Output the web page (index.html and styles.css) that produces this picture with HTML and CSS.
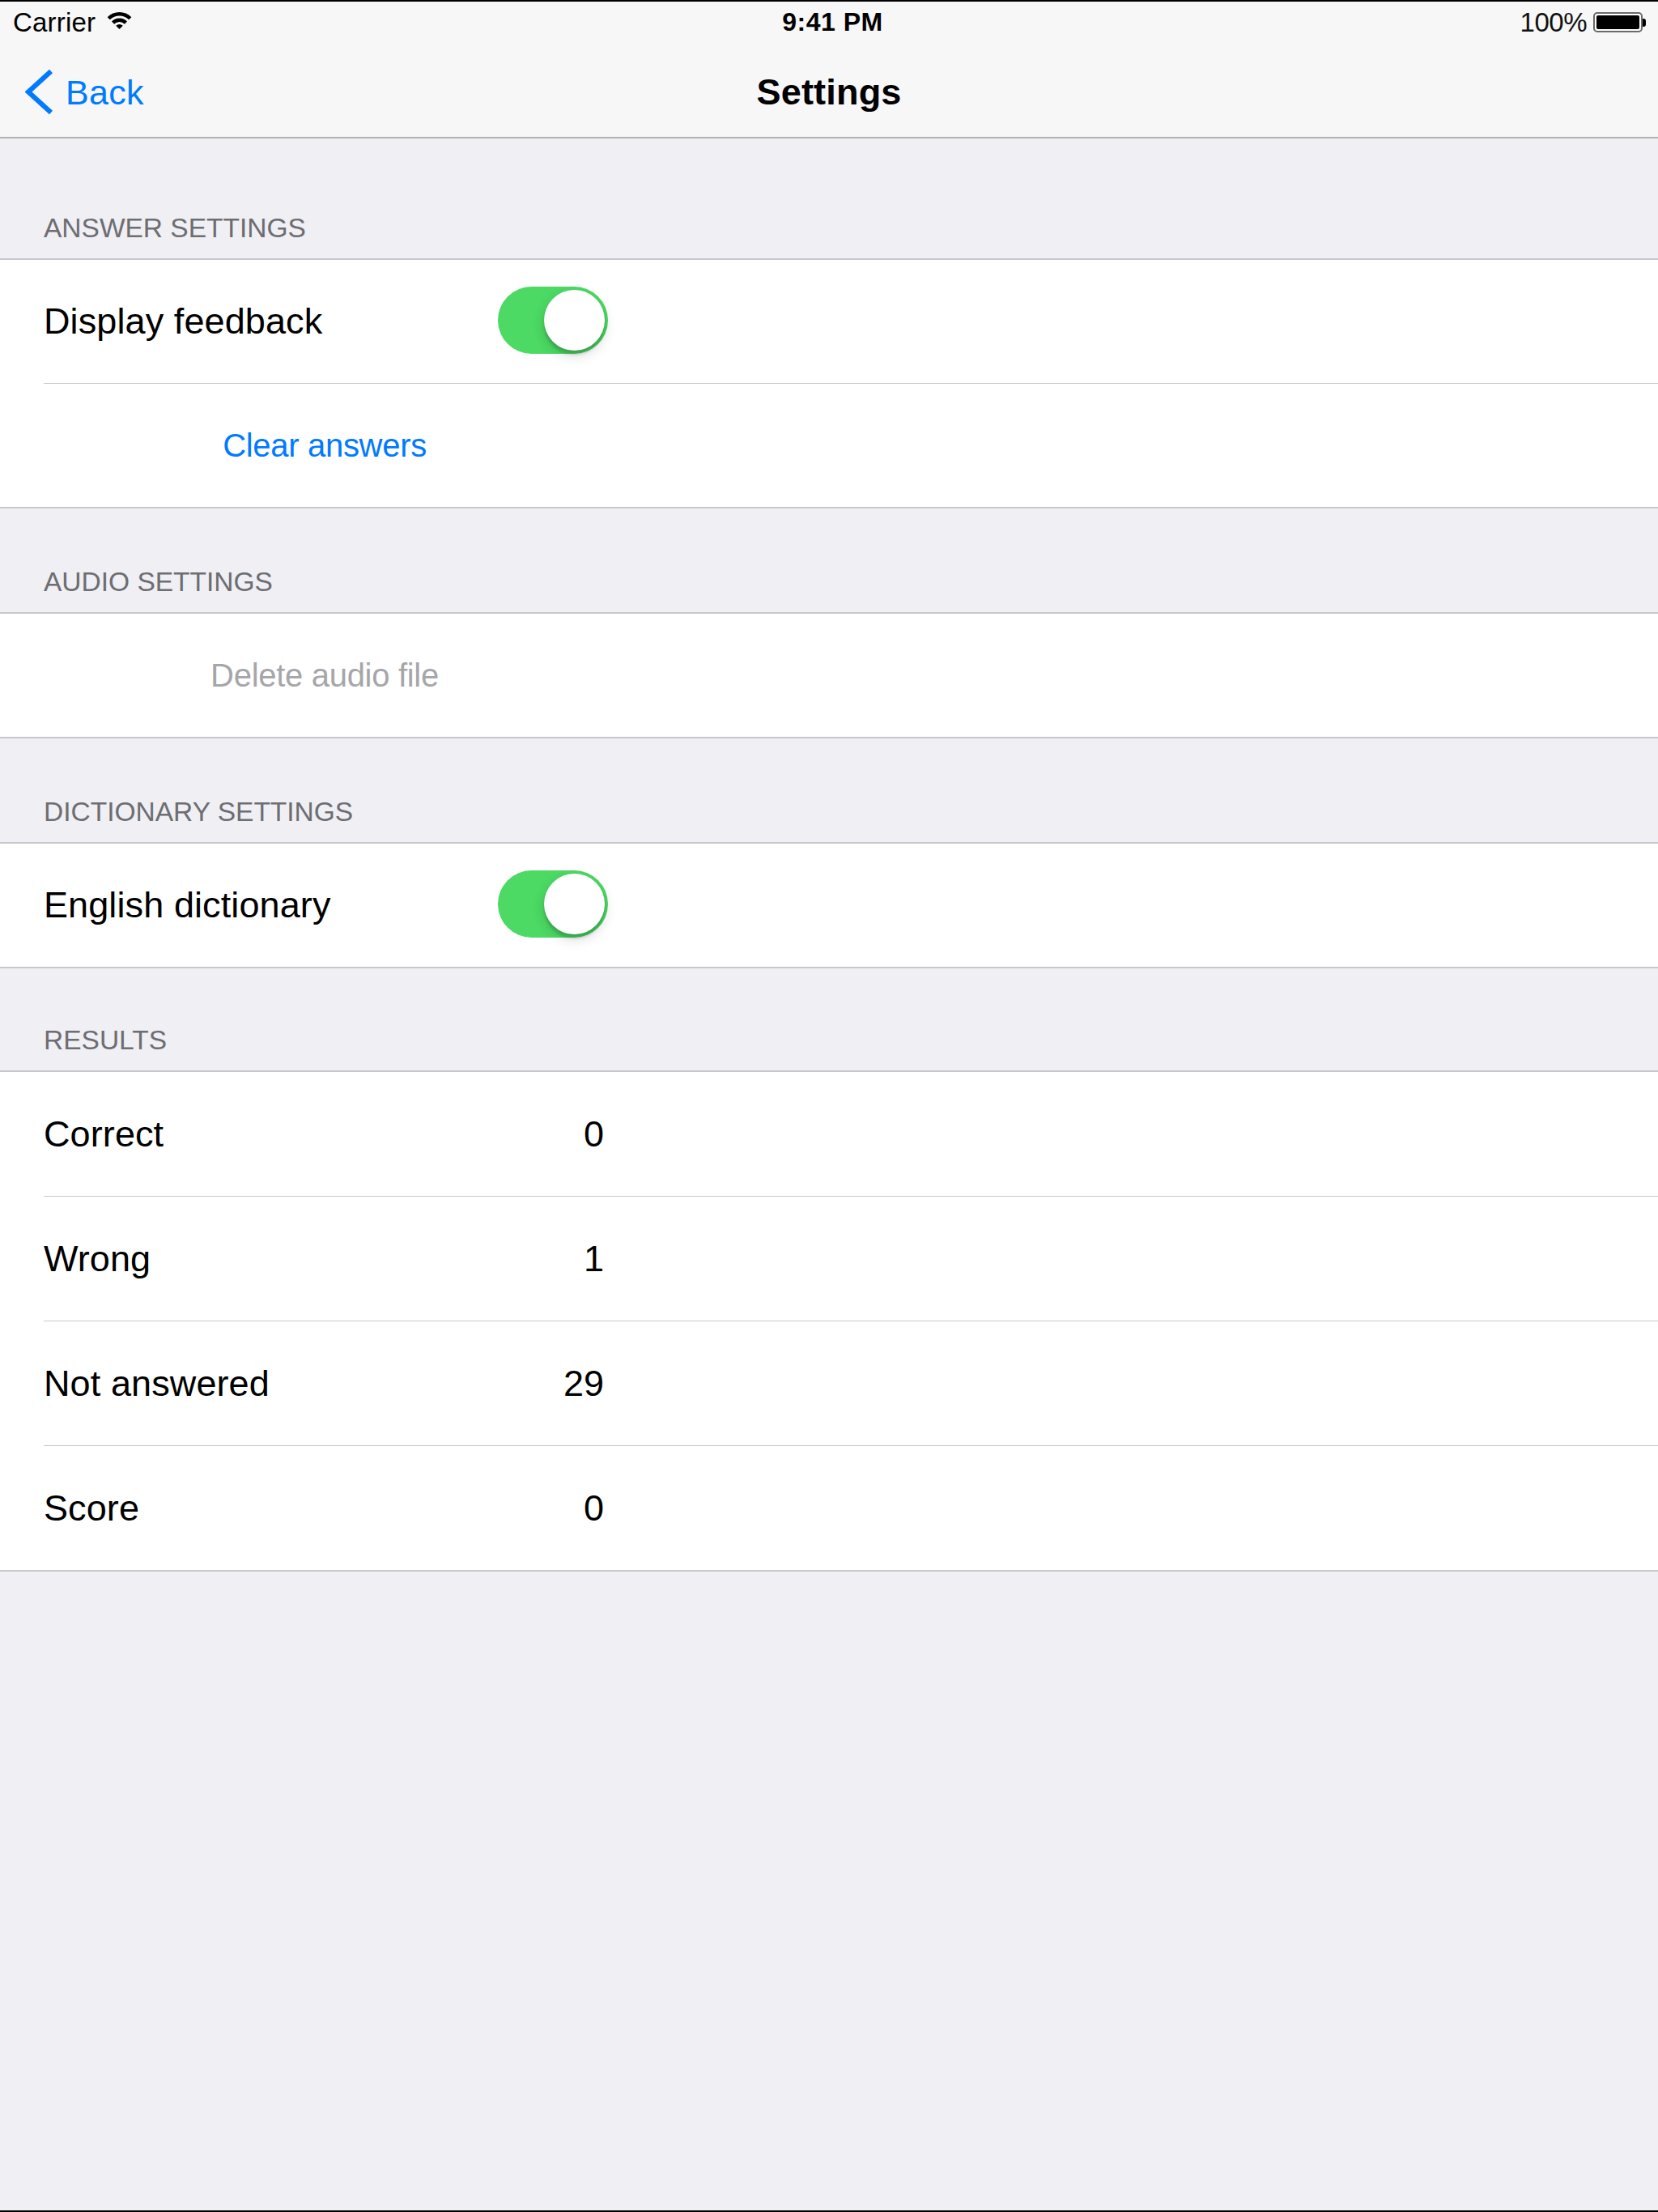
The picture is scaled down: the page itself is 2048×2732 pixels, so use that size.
FILE: index.html
```html
<!DOCTYPE html>
<html lang="en">
<head>
<meta charset="utf-8">
<title>Settings</title>
<link rel="stylesheet" href="styles.css">
</head>
<body>
<div class="screen">
  <header class="bars">
    <div class="status">
      <div class="status-left">
        <span class="carrier">Carrier</span>
        <svg class="wifi" width="31" height="23" viewBox="0 0 31 23">
          <path d="M0.65 7.15 A21 21 0 0 1 30.35 7.15 L27.17 10.33 A16.5 16.5 0 0 0 3.83 10.33 Z"/>
          <path d="M5.95 12.45 A13.5 13.5 0 0 1 25.05 12.45 L21.86 15.64 A9 9 0 0 0 9.14 15.64 Z"/>
          <path d="M15.5 22 L11.26 17.76 A6 6 0 0 1 19.74 17.76 Z"/>
        </svg>
      </div>
      <div class="status-time">9:41 PM</div>
      <div class="status-right">
        <span class="pct">100%</span>
        <div class="battery"><div class="battery-body"><div class="battery-fill"></div></div><div class="battery-nub"></div></div>
      </div>
    </div>
    <nav class="navbar">
      <a class="back">
        <svg class="chevron" width="36" height="58" viewBox="0 0 36 58">
          <path d="M32 3 L4 28.5 L32 54" fill="none" stroke="#007aff" stroke-width="6" stroke-linejoin="miter"/>
        </svg>
        <span class="back-label">Back</span>
      </a>
      <div class="title">Settings</div>
      <div class="nav-right"></div>
    </nav>
  </header>

  <main class="table">
    <div class="sec-header first">ANSWER SETTINGS</div>
    <section class="group">
      <div class="row"><div class="row-inner sep"><div class="content">
        <span class="label">Display feedback</span>
        <div class="switch"><div class="knob"></div></div>
      </div></div></div>
      <div class="row"><div class="row-inner"><div class="content center">
        <span class="link">Clear answers</span>
      </div></div></div>
    </section>

    <div class="sec-header">AUDIO SETTINGS</div>
    <section class="group">
      <div class="row"><div class="row-inner"><div class="content center">
        <span class="link disabled">Delete audio file</span>
      </div></div></div>
    </section>

    <div class="sec-header">DICTIONARY SETTINGS</div>
    <section class="group">
      <div class="row"><div class="row-inner"><div class="content">
        <span class="label">English dictionary</span>
        <div class="switch"><div class="knob"></div></div>
      </div></div></div>
    </section>

    <div class="sec-header short">RESULTS</div>
    <section class="group">
      <div class="row tall"><div class="row-inner sep"><div class="content">
        <span class="label">Correct</span><span class="value">0</span>
      </div></div></div>
      <div class="row tall"><div class="row-inner sep"><div class="content">
        <span class="label">Wrong</span><span class="value">1</span>
      </div></div></div>
      <div class="row tall"><div class="row-inner sep"><div class="content">
        <span class="label">Not answered</span><span class="value">29</span>
      </div></div></div>
      <div class="row tall"><div class="row-inner"><div class="content">
        <span class="label">Score</span><span class="value">0</span>
      </div></div></div>
    </section>
  </main>
</div>
</body>
</html>
```

FILE: styles.css
```css
* { box-sizing: border-box; }

html, body {
  margin: 0;
  padding: 0;
}

body {
  width: 2048px;
  height: 2732px;
  background: #efeff4;
  font-family: "Liberation Sans", Arial, sans-serif;
  color: #000;
}

.screen {
  width: 2048px;
  height: 2732px;
  background: #efeff4;
  border-top: 2px solid #000;
  border-bottom: 2px solid #000;
  display: flex;
  flex-direction: column;
}

/* ---------- status + nav ---------- */
.bars {
  background: #f7f7f7;
  border-bottom: 2px solid #b1b1b3;
}

.status {
  height: 51px;
  display: grid;
  grid-template-columns: 1fr auto 1fr;
  align-items: center;
  padding: 0 15px 0 16px;
  font-size: 33px;
}

.status-left {
  display: flex;
  align-items: center;
  gap: 14px;
}

.carrier { letter-spacing: 0.2px; }

.wifi { fill: #000; margin-top: -4px; }

.status-time {
  font-weight: 700;
  font-size: 32px;
  letter-spacing: 0.5px;
  padding-left: 8px;
}

.status-right {
  display: flex;
  align-items: center;
  justify-content: flex-end;
  gap: 8px;
}

.pct { letter-spacing: -0.5px; color: #111; }

.battery {
  display: flex;
  align-items: center;
}

.battery-body {
  width: 61px;
  height: 25px;
  border: 2px solid #6a6a6a;
  border-radius: 5px;
  padding: 2px;
  background: #fff;
}

.battery-fill {
  width: 100%;
  height: 100%;
  background: #000;
  border-radius: 2px;
}

.battery-nub {
  width: 4px;
  height: 10px;
  background: #000;
  border-radius: 0 3px 3px 0;
}

.navbar {
  height: 116px;
  display: grid;
  grid-template-columns: 1fr auto 1fr;
  align-items: center;
  padding-top: 6px;
}

.back {
  display: flex;
  align-items: center;
  gap: 14px;
  padding-left: 31px;
  color: #007aff;
}

.chevron { display: block; }

.back-label {
  font-size: 43px;
  letter-spacing: 0.3px;
}

.title {
  font-size: 45px;
  font-weight: 700;
  letter-spacing: 0.2px;
}

/* ---------- table ---------- */
.table {
  display: flex;
  flex-direction: column;
}

.sec-header {
  height: 128px;
  display: flex;
  align-items: flex-end;
  padding: 0 0 21px 54px;
  font-size: 33.5px;
  line-height: 1;
  color: #6d6d72;
}

.sec-header.first { height: 148px; }
.sec-header.short { height: 126px; }

.group {
  background: #fff;
  border-top: 2px solid #c8c7cc;
  border-bottom: 2px solid #c8c7cc;
}

.row {
  padding-left: 54px;
}

.row-inner {
  height: 152px;
  display: flex;
  align-items: center;
}

.row-inner.sep {
  height: 153px;
  border-bottom: 1px solid #c8c7cc;
}

.row.tall .row-inner { height: 153px; }
.row.tall .row-inner.sep { height: 154px; }

.content {
  width: 694px;
  display: flex;
  align-items: center;
  justify-content: space-between;
}

.content.center { justify-content: center; }

.label {
  font-size: 45px;
  letter-spacing: 0.1px;
}

.value {
  font-size: 45px;
  padding-right: 2px;
}

.link {
  font-size: 40px;
  color: #007aff;
  letter-spacing: -0.3px;
}

.link.disabled { color: #a6a6aa; }

/* ---------- switch ---------- */
.switch {
  width: 136px;
  height: 83px;
  border-radius: 42px;
  background: #4cd964;
  display: flex;
  align-items: center;
  justify-content: flex-end;
  padding: 4px;
  margin-right: -3px;
  margin-top: -3px;
}

.knob {
  width: 75px;
  height: 75px;
  border-radius: 50%;
  background: #fff;
  box-shadow: 0 6px 2px rgba(0, 0, 0, 0.06),
              0 4px 4px rgba(0, 0, 0, 0.1),
              0 6px 16px rgba(0, 0, 0, 0.15);
}
```
